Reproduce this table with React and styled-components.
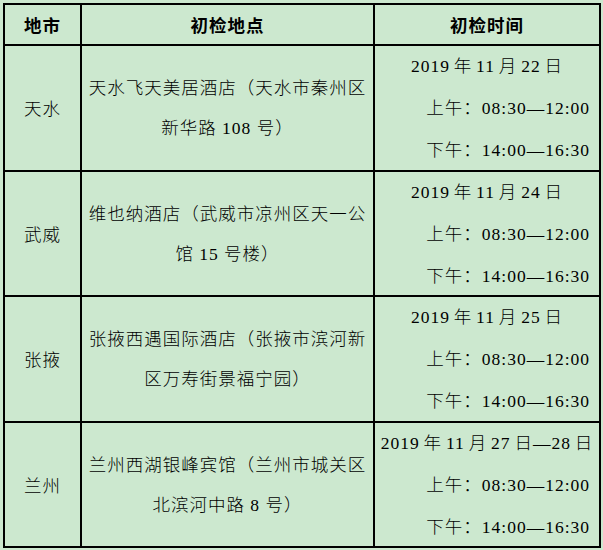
import styled, { createGlobalStyle } from "styled-components";

const GlobalStyle = createGlobalStyle`
  html, body {
    margin: 0;
    padding: 0;
    background: #cce8cf;
  }
  body {
    font-family: "Liberation Serif", "Noto Sans CJK SC", serif;
    color: #000;
  }
`;

const Sheet = styled.div`
  padding: 3px 0 0 3px;
`;

const Grid = styled.div`
  display: grid;
  grid-template-columns: 75px 291px 224px;
  grid-template-rows: 39px 124px 123px 124px 123px;
  gap: 2px;
  padding: 2px;
  width: fit-content;
  background: #000;
`;

const Cell = styled.div`
  background: #cce8cf;
  display: flex;
  flex-direction: column;
  justify-content: center;
  align-items: center;
  font-size: 17.5px;
  font-weight: 300;
  letter-spacing: 1px;
  white-space: nowrap;
`;

const HeadCell = styled(Cell)`
  font-family: "Noto Sans CJK SC", sans-serif;
  font-weight: 700;
  line-height: 39px;
`;

const CityCell = styled(Cell)`
  font-family: "Noto Sans CJK SC", serif;
  line-height: 40px;
`;

const PlaceCell = styled(Cell)`
  line-height: 40px;
  text-align: center;
`;

const TimeCell = styled(Cell)`
  line-height: 42px;
`;

const DateLine = styled.div`
  align-self: center;
  word-spacing: -1.5px;
`;

const HourLine = styled.div`
  align-self: flex-end;
  padding-right: 9px;
`;

const rows = [
  {
    city: "天水",
    place: ["天水飞天美居酒店（天水市秦州区", "新华路 108 号）"],
    date: "2019 年 11 月 22 日",
  },
  {
    city: "武威",
    place: ["维也纳酒店（武威市凉州区天一公", "馆 15 号楼）"],
    date: "2019 年 11 月 24 日",
  },
  {
    city: "张掖",
    place: ["张掖西遇国际酒店（张掖市滨河新", "区万寿街景福宁园）"],
    date: "2019 年 11 月 25 日",
  },
  {
    city: "兰州",
    place: ["兰州西湖银峰宾馆（兰州市城关区", "北滨河中路 8 号）"],
    date: "2019 年 11 月 27 日—28 日",
  },
];

export default function App() {
  return (
    <>
      <GlobalStyle />
      <Sheet>
        <Grid>
          <HeadCell>地市</HeadCell>
          <HeadCell>初检地点</HeadCell>
          <HeadCell>初检时间</HeadCell>
          {rows.map((r) => (
            <>
              <CityCell key={r.city + "c"}>{r.city}</CityCell>
              <PlaceCell key={r.city + "p"}>
                {r.place.map((line) => (
                  <div key={line}>{line}</div>
                ))}
              </PlaceCell>
              <TimeCell key={r.city + "t"}>
                <DateLine>{r.date}</DateLine>
                <HourLine>上午：08:30—12:00</HourLine>
                <HourLine>下午：14:00—16:30</HourLine>
              </TimeCell>
            </>
          ))}
        </Grid>
      </Sheet>
    </>
  );
}
